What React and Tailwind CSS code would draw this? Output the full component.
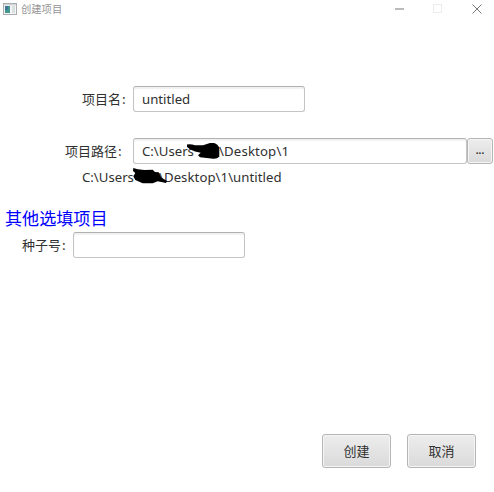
const uiFont = "font-['Noto_Sans','Noto_Sans_CJK_SC',sans-serif]";
const cjkFont = "font-['Noto_Sans_CJK_SC',sans-serif]";

function Label({ children, className }) {
  return (
    <div className={`${cjkFont} flex text-[13px] leading-[26px] whitespace-nowrap ${className}`}>
      <span>{children}</span>
      <span className="ml-[1px]">:</span>
    </div>
  );
}

function Field({ children, className }) {
  return (
    <div
      className={`h-[26px] rounded-[3px] border border-[#c4c4c4] border-t-[#b0b0b0] bg-white pl-2 leading-[24px] whitespace-nowrap shadow-[inset_0_2px_1px_#f1f1f1] ${className}`}
    >
      {children}
    </div>
  );
}

function DialogButton({ children }) {
  return (
    <button
      className={`${cjkFont} h-[34px] w-[69px] rounded-[3px] border border-[#b5b5b5] bg-linear-to-b from-[#ededed] to-[#dadada] text-[13px] shadow-[inset_0_0_0_1px_#f5f5f5]`}
    >
      {children}
    </button>
  );
}

function TitleBar() {
  return (
    <div className="flex h-[18px] items-center text-[#949494]">
      <svg className="ml-[3px]" width="14" height="12" viewBox="0 0 14 12">
        <rect x="0.5" y="0.5" width="13" height="11" fill="#f5f5f5" stroke="#a9adb0" />
        <rect x="1" y="1" width="12" height="1.5" fill="#d3d7da" />
        <rect x="2" y="3" width="5" height="7" fill="#43988d" />
        <rect x="2" y="3" width="3" height="4" fill="#3f7799" />
        <rect x="9" y="3" width="3" height="7" fill="#dde0e1" />
      </svg>
      <span className={`${cjkFont} ml-[4px] text-[10.3px] leading-[18px]`}>创建项目</span>
      <svg className="ml-auto mr-3" width="88" height="12" viewBox="0 0 88 12" fill="none">
        <path d="M1 6h9" stroke="#aaa" strokeWidth="1.6" />
        <rect x="39.5" y="1.5" width="8" height="8" stroke="#ececec" />
        <path d="M78.5 1.5l9 9M87.5 1.5l-9 9" stroke="#777" strokeWidth="1" />
      </svg>
    </div>
  );
}

export default function App() {
  return (
    <div className={`${uiFont} flex h-[492px] w-[494px] flex-col overflow-hidden bg-white text-[13.2px] text-[#303030]`}>
      <TitleBar />

      <div className="mt-[68px] flex">
        <Label className="w-[133px] pl-[82px]">项目名</Label>
        <Field className="w-[172px]">untitled</Field>
      </div>

      <div className="mt-[26px] flex">
        <Label className="w-[133px] pl-[65px]">项目路径</Label>
        <Field className="relative flex w-[334px]">
          <span className="w-[77px]">C:\Users</span>
          <span className="tracking-[0.15px]">\Desktop\1</span>
          <svg className="absolute top-[4px] left-[52px]" width="36" height="18" viewBox="0 0 36 18">
            <path
              d="M1 1.5Q5 1 9 2.3H17L24 0H28Q32 1 33.3 5V13.7Q31 16 27.3 15.7L14 14.3L12 12.3L14.7 9.7L9 8.5L4 6.3L1 4Z"
              fill="#000"
            />
          </svg>
        </Field>
        <button className="h-[26px] w-[26px] rounded-[3px] border border-[#b5b5b5] bg-linear-to-b from-[#ededed] to-[#dadada] pb-[2px] text-[10px] font-bold shadow-[inset_0_0_0_1px_#f5f5f5]">
          ...
        </button>
      </div>

      <div className="relative flex h-[26px] pl-[82px] leading-[26px] whitespace-nowrap">
        <span className="w-[77px]">C:\Users</span>
        <span className="tracking-[0.05px]">\Desktop\1\untitled</span>
        <svg className="absolute top-[3px] left-[132px]" width="36" height="19" viewBox="0 0 36 19">
          <path
            d="M1.3 1L5.7 2.2L12.3 3L20.7 2.7L23 5L26.7 5.3L29.3 10.5L35 14L34 16L25.7 14.3L20.7 16.3H10.7L3.3 13L1.3 9.3L3.3 6L1 4Z"
            fill="#000"
          />
        </svg>
      </div>

      <div className={`${cjkFont} mt-[14px] h-[28px] pl-[5px] text-[17.1px] leading-[28px] text-[#0000ff]`}>其他选填项目</div>

      <div className="flex">
        <Label className="w-[73px] pl-[22px]">种子号</Label>
        <Field className="w-[172px]" />
      </div>

      <div className="mt-auto mb-[24px] flex justify-end gap-[16px] pr-[18px]">
        <DialogButton>创建</DialogButton>
        <DialogButton>取消</DialogButton>
      </div>
    </div>
  );
}
